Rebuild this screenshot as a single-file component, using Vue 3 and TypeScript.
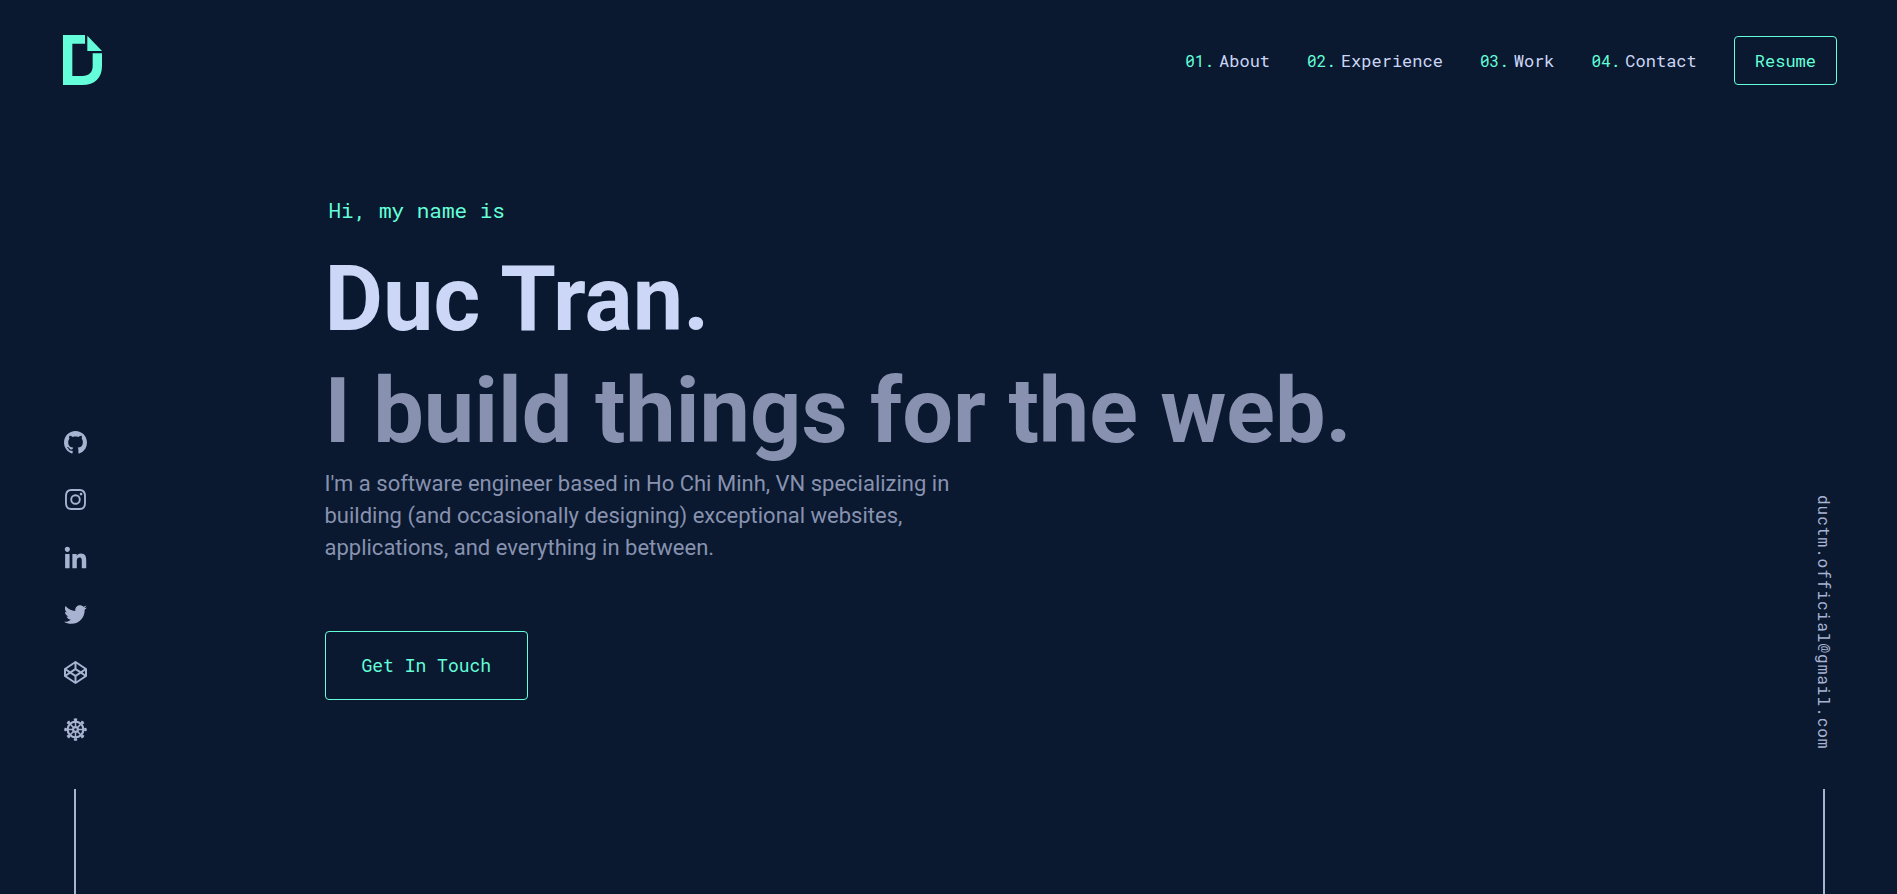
<script setup lang="ts">
interface NavItem {
  num: string
  label: string
  href: string
}

interface SocialLink {
  name: string
  href: string
  viewBox: string
  path: string
}

const navItems: NavItem[] = [
  { num: '01.', label: 'About', href: '#about' },
  { num: '02.', label: 'Experience', href: '#experience' },
  { num: '03.', label: 'Work', href: '#work' },
  { num: '04.', label: 'Contact', href: '#contact' },
]

const email = 'ductm.official@gmail.com'

const socials: SocialLink[] = [
  {
    name: 'GitHub',
    href: '#github',
    viewBox: '0 0 16 16',
    path: 'M8 0C3.58 0 0 3.58 0 8c0 3.54 2.29 6.53 5.47 7.59.4.07.55-.17.55-.38 0-.19-.01-.82-.01-1.49-2.01.37-2.53-.49-2.69-.94-.09-.23-.48-.94-.82-1.13-.28-.15-.68-.52-.01-.53.63-.01 1.08.58 1.23.82.72 1.21 1.87.87 2.33.66.07-.52.28-.87.51-1.07-1.78-.2-3.64-.89-3.64-3.95 0-.87.31-1.59.82-2.15-.08-.2-.36-1.02.08-2.12 0 0 .67-.21 2.2.82.64-.18 1.32-.27 2-.27.68 0 1.36.09 2 .27 1.53-1.04 2.2-.82 2.2-.82.44 1.1.16 1.92.08 2.12.51.56.82 1.27.82 2.15 0 3.07-1.87 3.75-3.65 3.95.29.25.54.73.54 1.48 0 1.07-.01 1.93-.01 2.2 0 .21.15.46.55.38A8.013 8.013 0 0016 8c0-4.42-3.58-8-8-8z',
  },
  {
    name: 'Instagram',
    href: '#instagram',
    viewBox: '1 1 22 22',
    path: 'M12 2c2.717 0 3.056.01 4.122.06 1.065.05 1.79.217 2.428.465.66.254 1.216.598 1.772 1.153a4.908 4.908 0 0 1 1.153 1.772c.247.637.415 1.363.465 2.428.047 1.066.06 1.405.06 4.122 0 2.717-.01 3.056-.06 4.122-.05 1.065-.218 1.79-.465 2.428a4.883 4.883 0 0 1-1.153 1.772 4.915 4.915 0 0 1-1.772 1.153c-.637.247-1.363.415-2.428.465-1.066.047-1.405.06-4.122.06-2.717 0-3.056-.01-4.122-.06-1.065-.05-1.79-.218-2.428-.465a4.89 4.89 0 0 1-1.772-1.153 4.904 4.904 0 0 1-1.153-1.772c-.248-.637-.415-1.363-.465-2.428C2.013 15.056 2 14.717 2 12c0-2.717.01-3.056.06-4.122.05-1.066.217-1.79.465-2.428a4.88 4.88 0 0 1 1.153-1.772A4.897 4.897 0 0 1 5.45 2.525c.638-.248 1.362-.415 2.428-.465C8.944 2.013 9.283 2 12 2zm0 1.8c-2.67 0-2.986.01-4.04.058-2.7.123-3.98 1.4-4.1 4.1C3.81 9.012 3.8 9.33 3.8 12s.01 2.986.058 4.04c.12 2.7 1.4 3.98 4.1 4.1 1.055.05 1.37.06 4.04.06s2.987-.01 4.04-.06c2.7-.12 3.98-1.4 4.1-4.1.05-1.054.06-1.37.06-4.04s-.01-2.987-.06-4.04c-.12-2.7-1.4-3.98-4.1-4.1C14.987 3.81 14.67 3.8 12 3.8zm0 3.2a5 5 0 1 1 0 10 5 5 0 0 1 0-10zm0 1.8a3.2 3.2 0 1 0 0 6.4 3.2 3.2 0 0 0 0-6.4zm5.3-3.3a1.3 1.3 0 1 1 0 2.6 1.3 1.3 0 0 1 0-2.6z',
  },
  {
    name: 'LinkedIn',
    href: '#linkedin',
    viewBox: '-16 16 480 480',
    path: 'M100.28 480H7.4V180.9h92.88zM53.79 140.1C24.09 140.1 0 115.5 0 85.8a53.79 53.79 0 0 1 107.58 0c0 29.7-24.1 54.3-53.79 54.3zM447.9 480h-92.68V334.4c0-34.7-.7-79.2-48.29-79.2-48.29 0-55.69 37.7-55.69 76.7V480h-92.78V180.9h89.08v40.8h1.3c12.4-23.5 42.69-48.3 87.88-48.3 94 0 111.28 61.9 111.28 142.3V480z',
  },
  {
    name: 'Twitter',
    href: '#twitter',
    viewBox: '0 0 512 512',
    path: 'M459.37 151.716c.325 4.548.325 9.097.325 13.645 0 138.72-105.583 298.558-298.558 298.558-59.452 0-114.68-17.219-161.137-47.106 8.447.974 16.568 1.299 25.34 1.299 49.055 0 94.213-16.568 130.274-44.832-46.132-.975-84.792-31.188-98.112-72.772 6.498.974 12.995 1.624 19.818 1.624 9.421 0 18.843-1.3 27.614-3.573-48.081-9.747-84.143-51.98-84.143-102.985v-1.299c13.969 7.797 30.214 12.67 47.431 13.319-28.264-18.843-46.781-51.005-46.781-87.391 0-19.492 5.197-37.36 14.294-52.954 51.655 63.675 129.3 105.258 216.365 109.807-1.624-7.797-2.599-15.918-2.599-24.04 0-57.828 46.782-104.934 104.934-104.934 30.213 0 57.502 12.67 76.67 33.137 23.715-4.548 46.456-13.32 66.599-25.34-7.798 24.366-24.366 44.833-46.132 57.827 21.117-2.273 41.584-8.122 60.426-16.243-14.292 20.791-32.161 39.308-52.628 54.253z',
  },
  {
    name: 'CodePen',
    href: '#codepen',
    viewBox: '0 0 512 512',
    path: 'M502.285 159.704l-234-156c-7.987-4.915-16.511-4.96-24.571 0l-234 156C3.714 163.703 0 170.847 0 177.989v155.999c0 7.143 3.714 14.286 9.715 18.286l234 156.022c7.987 4.915 16.511 4.96 24.571 0l234-156.022c6-3.999 9.715-11.143 9.715-18.286V177.989c-.001-7.142-3.715-14.286-9.716-18.285zM278 63.131l172.286 114.858-76.857 51.429L278 165.703V63.131zm-44 0v102.572l-95.429 63.715-76.857-51.429L234 63.131zM44 219.132l55.143 36.857L44 292.847v-73.715zm190 229.715L61.714 333.989l76.857-51.429L234 346.275v102.572zm22-140.858l-77.715-52 77.715-52 77.715 52-77.715 52zm22 140.858V346.275l95.429-63.715 76.857 51.429L278 448.847zm190-156l-55.143-36.857L468 219.131v73.716z',
  },
]

const spokeAngles: number[] = [0, 45, 90, 135, 180, 225, 270, 315]
</script>

<template>
  <div class="page">
    <header class="header">
      <a class="logo" href="#home" aria-label="Home">
        <svg viewBox="0 0 117 150" aria-hidden="true">
          <path d="M0 0H66V26H28V123H58C78 123 89 112 89 93V55H117V93C117 129 95 150 58 150H0Z" />
          <path d="M73 2L117 48H73Z" />
        </svg>
      </a>
      <nav class="nav" aria-label="Primary">
        <ol class="nav-list">
          <li v-for="item in navItems" :key="item.href">
            <a class="nav-link" :href="item.href">
              <span class="nav-num">{{ item.num }}</span>
              <span>{{ item.label }}</span>
            </a>
          </li>
        </ol>
        <a class="resume" href="#resume">Resume</a>
      </nav>
    </header>

    <div class="body">
      <aside class="side" aria-label="Social links">
        <ul class="socials">
          <li v-for="s in socials" :key="s.name">
            <a class="social" :href="s.href" :aria-label="s.name">
              <svg :viewBox="s.viewBox" aria-hidden="true"><path fill-rule="evenodd" :d="s.path" /></svg>
            </a>
          </li>
          <li>
            <a class="social" href="#wheel" aria-label="Wheel">
              <svg viewBox="-12 -12 24 24" aria-hidden="true">
                <circle class="rim" r="8.2" />
                <circle class="hub" r="2.5" />
                <g v-for="a in spokeAngles" :key="a" :transform="`rotate(${a})`">
                  <path d="M-0.8 -2.8H0.8V-8H-0.8Z" />
                  <path d="M-1.5 -9L-1.9 -11.2Q0 -12.4 1.9 -11.2L1.5 -9Z" />
                </g>
              </svg>
            </a>
          </li>
        </ul>
        <span class="rule"></span>
      </aside>

      <main class="hero">
        <p class="greeting">Hi, my name is</p>
        <h1 class="title">Duc Tran.</h1>
        <h2 class="title subtitle">I build things for the web.</h2>
        <p class="intro">
          I'm a software engineer based in Ho Chi Minh, VN specializing in building (and
          occasionally designing) exceptional websites, applications, and everything in between.
        </p>
        <a class="cta" :href="`mailto:${email}`">Get In Touch</a>
      </main>

      <aside class="side side-right" aria-label="Email">
        <a class="email" :href="`mailto:${email}`">{{ email }}</a>
        <span class="rule"></span>
      </aside>
    </div>
  </div>
</template>

<style>
body {
  background: #0a192f;
}
</style>

<style scoped>
.page {
  --green: #64ffda;
  --white: #ccd6f6;
  --slate: #8892b0;
  --light-slate: #a8b2d1;
  --mono: "Roboto Mono", "DejaVu Sans Mono", monospace;
  display: flex;
  flex-direction: column;
  box-sizing: border-box;
  min-height: 100vh;
  background: #0a192f;
  color: var(--slate);
  font-family: Roboto, "Liberation Sans", sans-serif;
}

a {
  color: inherit;
  text-decoration: none;
}

ol,
ul {
  list-style: none;
  margin: 0;
  padding: 0;
}

.header {
  display: flex;
  align-items: flex-end;
  justify-content: space-between;
  padding: 35px 60px 0 63px;
}

.logo svg {
  display: block;
  width: 39px;
  height: 50px;
  fill: var(--green);
}

.nav,
.nav-list {
  display: flex;
  align-items: center;
  gap: 37px;
}

.nav {
  font-family: var(--mono);
  font-size: 17px;
  line-height: 23px;
}

.nav-link {
  display: flex;
  align-items: baseline;
  gap: 5px;
  color: var(--white);
}

.nav-num {
  color: var(--green);
  font-size: 16px;
}

.resume {
  padding: 12px 20px;
  border: 1px solid var(--green);
  border-radius: 4px;
  color: var(--green);
}

.body {
  display: grid;
  grid-template-columns: 30px minmax(0, 1250px) 30px;
  justify-content: space-between;
  flex: 1;
  padding: 0 58px 0 60px;
}

.side {
  display: flex;
  flex-direction: column;
  align-items: center;
  justify-content: flex-end;
  gap: 48px;
  color: var(--light-slate);
}

.side-right {
  gap: 40px;
}

.socials {
  display: flex;
  flex-direction: column;
  justify-content: space-between;
  height: 310px;
}

.social svg {
  display: block;
  width: 23px;
  height: 23px;
  fill: currentColor;
}

.social .rim,
.social .hub {
  fill: none;
  stroke: currentColor;
  stroke-width: 2.3;
}

.rule {
  width: 2px;
  height: 105px;
  background: var(--light-slate);
}

.email {
  writing-mode: vertical-rl;
  font-family: var(--mono);
  font-size: 16px;
  line-height: 22px;
  letter-spacing: 1px;
}

.hero {
  padding-top: 111px;
}

.greeting {
  margin: 0 0 20px 4px;
  color: var(--green);
  font-family: var(--mono);
  font-size: 21px;
  line-height: 28px;
}

.title {
  margin: 0;
  color: var(--white);
  font-size: 90px;
  font-weight: 700;
  line-height: 112px;
}

.subtitle {
  color: var(--slate);
}

.intro {
  max-width: 640px;
  margin: 0 0 67px;
  font-size: 22px;
  line-height: 32px;
}

.cta {
  display: inline-block;
  padding: 22px 36px;
  border: 1px solid var(--green);
  border-radius: 4px;
  color: var(--green);
  font-family: var(--mono);
  font-size: 18px;
  line-height: 23px;
}
</style>
